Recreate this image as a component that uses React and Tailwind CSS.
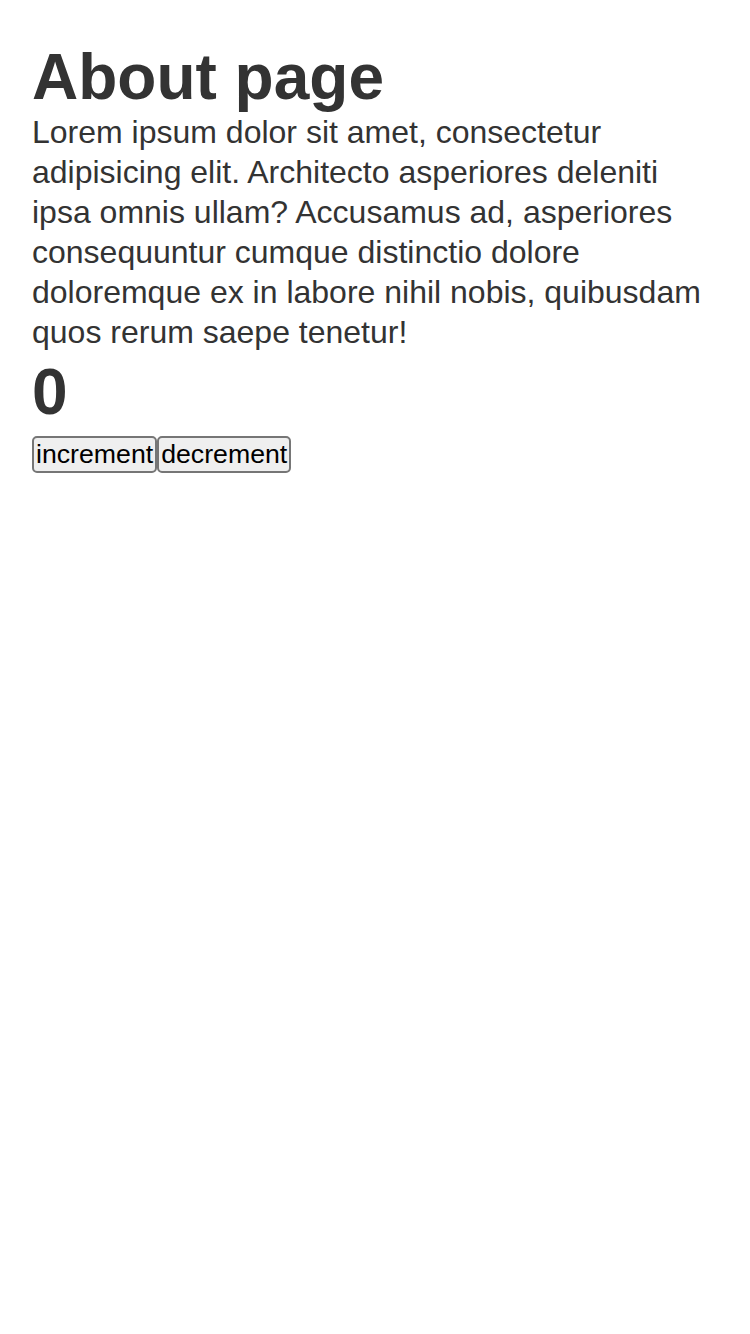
import { useState } from 'react';

export default function App() {
  const [count, setCount] = useState(0);

  return (
    <div className="min-h-screen bg-white px-8 pt-[42px] text-[#333333] font-['Liberation_Sans',Arial,sans-serif]">
      <h1 className="text-[64px] font-bold leading-[70px]">About page</h1>
      <p className="text-[32px] leading-[40px]">
        Lorem ipsum dolor sit amet, consectetur adipisicing elit. Architecto asperiores deleniti ipsa omnis ullam? Accusamus ad, asperiores consequuntur cumque distinctio dolore doloremque ex in labore nihil nobis, quibusdam quos rerum saepe tenetur!
      </p>
      <h2 className="text-[64px] font-bold leading-[80px]">{count}</h2>
      <div className="mt-1 flex">
        <button
          onClick={() => setCount(count + 1)}
          className="px-[2px] h-[37px] text-[26.7px] leading-none text-black bg-[#efefef] border-2 border-[#767676] rounded-[5px]"
        >
          increment
        </button>
        <button
          onClick={() => setCount(count - 1)}
          className="px-[2px] h-[37px] text-[26.7px] leading-none text-black bg-[#efefef] border-2 border-[#767676] rounded-[5px]"
        >
          decrement
        </button>
      </div>
    </div>
  );
}
